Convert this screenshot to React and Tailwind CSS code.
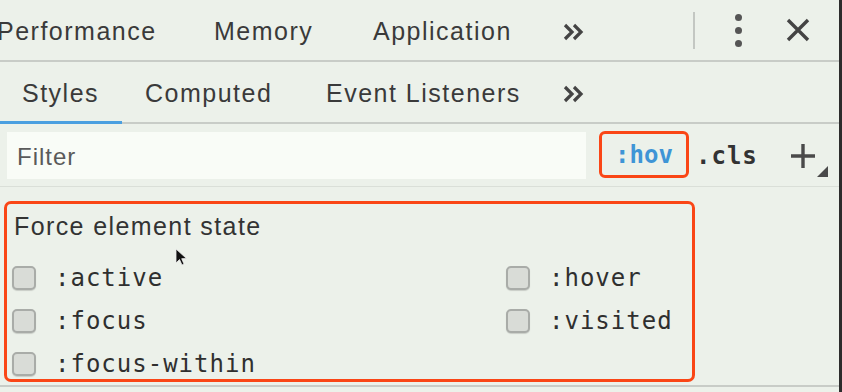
import React from 'react';

const sans = { fontFamily: '"Liberation Sans", Arial, sans-serif' };
const mono = { fontFamily: '"DejaVu Sans Mono", "Liberation Mono", monospace' };

const Chevrons = () => (
  <svg width="22" height="20" viewBox="0 0 22 20" className="text-[#444]">
    <path d="M2 3 L9 10 L2 17 M11 3 L18 10 L11 17" fill="none" stroke="currentColor" strokeWidth="3.2" />
  </svg>
);

const Checkbox = ({ label }) => (
  <label className="flex items-center gap-[19px] h-full">
    <span className="w-[24px] h-[24px] rounded-[5px] bg-[#d9dcd7] border-2 border-[#a9aca8] shadow-[0_1px_1px_rgba(0,0,0,0.15)]" />
    <span className="text-[24px] tracking-[1px] text-[#2f2f2f]" style={mono}>
      {label}
    </span>
  </label>
);

const App = () => {
  return (
    <div
      className="relative w-[842px] h-[392px] overflow-hidden bg-[#ecf1ea] border-r-[3px] border-[#2c2c2c] text-[#3a3a3a]"
      style={sans}
    >
      {/* main tabs */}
      <div className="flex items-center h-[62px] pt-[3px] border-b-2 border-[#c8ccc7] text-[25px] tracking-[1.5px]">
        <div className="w-[214px] -ml-[3px]">Performance</div>
        <div className="w-[162px] pl-[3px]">Memory</div>
        <div className="w-[190px]">Application</div>
        <div className="w-[130px] flex">
          <Chevrons />
        </div>
        <div className="w-[2px] h-[37px] -mt-[3px] bg-[#c3c7c2]" />
        <div className="ml-[40px] -mt-[3px] flex flex-col gap-[6px]">
          <span className="w-[7px] h-[7px] rounded-full bg-[#555]" />
          <span className="w-[7px] h-[7px] rounded-full bg-[#555]" />
          <span className="w-[7px] h-[7px] rounded-full bg-[#555]" />
        </div>
        <svg className="ml-[43px] -mt-[3px]" width="26" height="26" viewBox="0 0 26 26">
          <path d="M3 3 L23 23 M23 3 L3 23" stroke="#444" strokeWidth="3.4" />
        </svg>
      </div>

      {/* sub tabs */}
      <div className="flex items-stretch h-[62px] border-b-2 border-[#c8ccc7] text-[25px] tracking-[1.5px]">
        <div className="w-[122px] pl-[22px] pt-[4px] flex items-center border-b-[3px] border-[#4a9fe0] -mb-[2px]">Styles</div>
        <div className="w-[204px] pl-[23px] pt-[4px] flex items-center">Computed</div>
        <div className="w-[237px] pt-[4px] flex items-center">Event Listeners</div>
        <div className="flex items-center pt-[4px]">
          <Chevrons />
        </div>
      </div>

      {/* filter bar */}
      <div className="flex items-start h-[63px] pl-[7px] pt-[8px] border-b border-[#dadfd8]">
        <div className="w-[579px] h-[47px] bg-[#f9fcf7] flex items-center pl-[10px] pt-[2px] text-[24px] tracking-[1px] text-[#5a5a5a]">
          Filter
        </div>
        <div
          className="ml-[13px] -mt-[1px] w-[90px] h-[47px] border-[3px] border-[#fa4616] rounded-[6px] flex items-center justify-center text-[24px] font-bold text-[#3f95d6]"
          style={mono}
        >
          :hov
        </div>
        <div className="ml-[7px] h-[47px] flex items-center text-[24px] font-bold tracking-[1px] text-[#333]" style={mono}>
          .cls
        </div>
        <div className="relative ml-[32px] h-[47px] flex items-center">
          <svg width="26" height="26" viewBox="0 0 26 26">
            <path d="M13 1 V25 M1 13 H25" stroke="#4a4a4a" strokeWidth="3.4" />
          </svg>
          <svg className="absolute left-[27px] top-[34px]" width="11" height="11" viewBox="0 0 11 11">
            <path d="M11 0 V11 H0 Z" fill="#4a4a4a" />
          </svg>
        </div>
      </div>

      {/* element state */}
      <div className="h-[200px] pt-[14px] border-b-2 border-[#c8ccc7]">
        <div className="ml-[4px] w-[691px] h-[181px] border-[3px] border-[#fa4616] rounded-[7px] pl-[7px]">
          <div className="h-[53px] pt-[2px] leading-[40px] text-[25px] tracking-[1.4px] text-[#333]">Force element state</div>
          <div className="grid grid-cols-[494px_1fr] grid-rows-[42px_43px_43px] -ml-[2px]">
            <Checkbox label=":active" />
            <Checkbox label=":hover" />
            <Checkbox label=":focus" />
            <Checkbox label=":visited" />
            <Checkbox label=":focus-within" />
          </div>
        </div>
      </div>

      {/* mouse pointer */}
      <svg className="absolute left-[175px] top-[248px]" width="14" height="20" viewBox="0 0 14 20">
        <path d="M1 1 L1 15 L4.5 11.5 L7 17 L9 16 L6.7 10.7 L11.5 10.5 Z" fill="#111" stroke="#eee" strokeWidth="0.8" />
      </svg>
    </div>
  );
};

export default App;
